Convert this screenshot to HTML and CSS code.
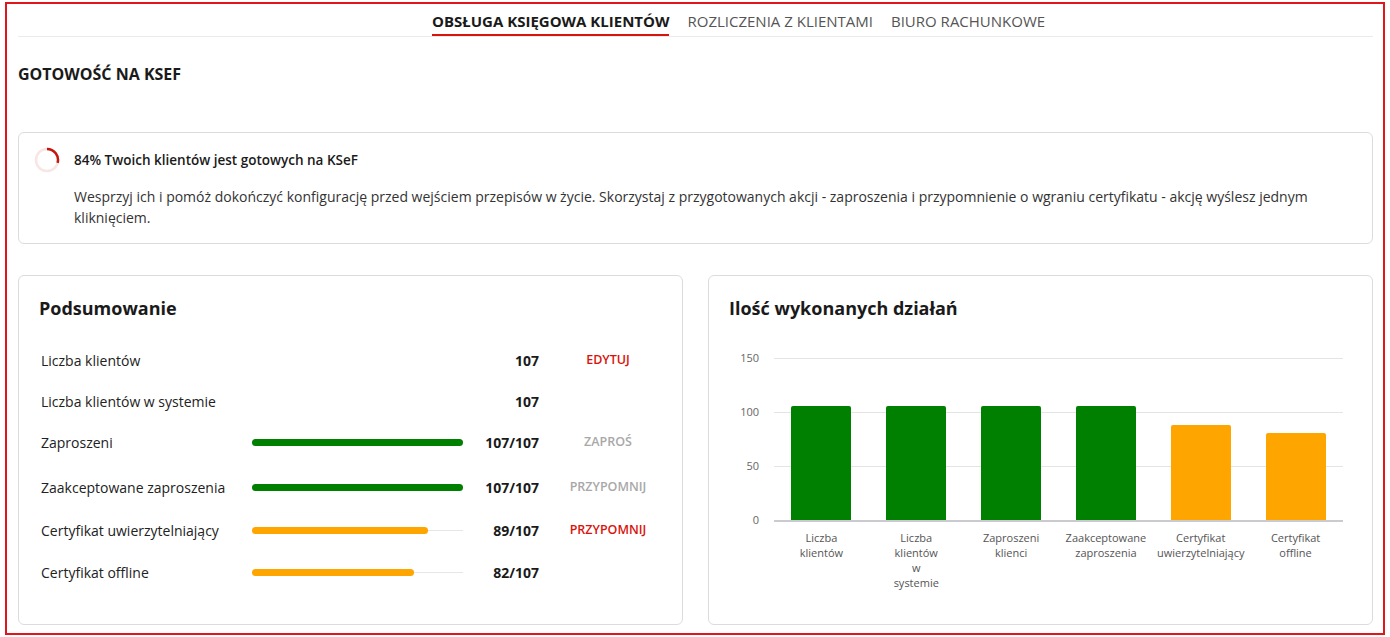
FILE: index.html
```html
<!DOCTYPE html>
<html lang="pl">
<head>
  <meta charset="UTF-8">
  <title>Gotowość na KSeF</title>
  <link rel="stylesheet" href="styles.css">
</head>
<body>
  <div class="frame">
    <div class="tabs">
      <a class="tab active">OBSŁUGA KSIĘGOWA KLIENTÓW</a>
      <a class="tab">ROZLICZENIA Z KLIENTAMI</a>
      <a class="tab">BIURO RACHUNKOWE</a>
    </div>

    <h1 class="page-title">GOTOWOŚĆ NA KSEF</h1>

    <div class="alert">
      <svg class="ring" width="26" height="26" viewBox="0 0 26 26">
        <circle cx="13" cy="13" r="11" fill="none" stroke="#f8e6e4" stroke-width="2.5"/>
        <path d="M13 2 A11 11 0 0 1 23.6 15.9" fill="none" stroke="#c4170f" stroke-width="2.5"/>
      </svg>
      <div class="alert-body">
        <div class="alert-title">84% Twoich klientów jest gotowych na KSeF</div>
        <p class="alert-text">Wesprzyj ich i pomóż dokończyć konfigurację przed wejściem przepisów w życie. Skorzystaj z przygotowanych akcji - zaproszenia i przypomnienie o wgraniu certyfikatu - akcję wyślesz jednym kliknięciem.</p>
      </div>
    </div>

    <div class="cards">
      <div class="card">
        <h2 class="card-title">Podsumowanie</h2>
        <div class="rows">
          <div class="row">
            <span class="label">Liczba klientów</span>
            <span class="track empty"></span>
            <span class="value">107</span>
            <span class="action red">EDYTUJ</span>
          </div>
          <div class="row">
            <span class="label">Liczba klientów w systemie</span>
            <span class="track empty"></span>
            <span class="value">107</span>
            <span class="action"></span>
          </div>
          <div class="row">
            <span class="label">Zaproszeni</span>
            <span class="track"><span class="fill green" style="width: 100%"></span></span>
            <span class="value">107/107</span>
            <span class="action grey">ZAPROŚ</span>
          </div>
          <div class="row">
            <span class="label">Zaakceptowane zaproszenia</span>
            <span class="track"><span class="fill green" style="width: 100%"></span></span>
            <span class="value">107/107</span>
            <span class="action grey">PRZYPOMNIJ</span>
          </div>
          <div class="row">
            <span class="label">Certyfikat uwierzytelniający</span>
            <span class="track"><span class="fill orange" style="width: 83.2%"></span></span>
            <span class="value">89/107</span>
            <span class="action red">PRZYPOMNIJ</span>
          </div>
          <div class="row">
            <span class="label">Certyfikat offline</span>
            <span class="track"><span class="fill orange" style="width: 76.6%"></span></span>
            <span class="value">82/107</span>
            <span class="action"></span>
          </div>
        </div>
      </div>

      <div class="card">
        <h2 class="card-title">Ilość wykonanych działań</h2>
        <div class="chart">
          <div class="axis">
            <span>150</span>
            <span>100</span>
            <span>50</span>
            <span>0</span>
          </div>
          <div class="plot">
            <div class="grid">
              <span></span><span></span><span></span><span class="base"></span>
            </div>
            <div class="bars">
              <div class="col"><div class="bar green" style="height: 114px"></div><div class="xlabel">Liczba<br>klientów</div></div>
              <div class="col"><div class="bar green" style="height: 114px"></div><div class="xlabel">Liczba<br>klientów<br>w<br>systemie</div></div>
              <div class="col"><div class="bar green" style="height: 114px"></div><div class="xlabel">Zaproszeni<br>klienci</div></div>
              <div class="col"><div class="bar green" style="height: 114px"></div><div class="xlabel">Zaakceptowane<br>zaproszenia</div></div>
              <div class="col"><div class="bar orange" style="height: 95px"></div><div class="xlabel">Certyfikat<br>uwierzytelniający</div></div>
              <div class="col"><div class="bar orange" style="height: 87px"></div><div class="xlabel">Certyfikat<br>offline</div></div>
            </div>
          </div>
        </div>
      </div>
    </div>
  </div>
</body>
</html>
```

FILE: styles.css
```css
* {
  margin: 0;
  padding: 0;
  box-sizing: border-box;
}

body {
  font-family: "Open Sans", "Noto Sans", sans-serif;
  color: #222;
  background: #fff;
}

.frame {
  margin: 2px 5px;
  height: 633px;
  border: 2px solid #e2141c;
  padding: 0 10px 0 11px;
  overflow: hidden;
}

.tabs {
  display: flex;
  gap: 18px;
  padding-left: 414px;
  border-bottom: 1px solid #ebebeb;
  height: 33px;
  align-items: flex-end;
}

.tab {
  font-size: 15px;
  color: #555;
  line-height: 20px;
  padding-bottom: 5px;
}

.tab.active {
  font-weight: 700;
  color: #1a1a1a;
  border-bottom: 2px solid #d7150f;
  padding-bottom: 3px;
}

.page-title {
  font-size: 16px;
  font-weight: 700;
  color: #1a1a1a;
  margin-top: 27px;
  line-height: 20px;
}

.alert {
  display: flex;
  gap: 14px;
  margin-top: 48px;
  border: 1px solid #dcdcdc;
  border-radius: 6px;
  padding: 14px 20px 14px 15px;
  height: 112px;
}

.ring {
  flex: none;
}

.alert-title {
  font-size: 13.5px;
  font-weight: 600;
  line-height: 26px;
  color: #1a1a1a;
}

.alert-text {
  font-size: 14px;
  line-height: 21px;
  color: #333;
  margin-top: 13px;
}

.cards {
  display: flex;
  gap: 25px;
  margin-top: 31px;
}

.card {
  flex: 1 1 0;
  min-width: 0;
  height: 350px;
  border: 1px solid #dcdcdc;
  border-radius: 6px;
  padding: 20px 20px;
}

.card-title {
  font-size: 18px;
  font-weight: 700;
  color: #1a1a1a;
  line-height: 24px;
}

.rows {
  margin-top: 20px;
  padding-left: 2px;
}

.row {
  display: flex;
  align-items: center;
  height: 41px;
}

.row:nth-child(4) {
  height: 49px;
}

.row:nth-child(5) {
  height: 37px;
}

.row:nth-child(6) {
  height: 47px;
}

.label {
  flex: none;
  width: 211px;
  font-size: 14px;
  color: #222;
}

.track {
  flex: none;
  width: 211px;
  height: 7px;
  background: linear-gradient(#e6e6e6, #e6e6e6) center / 100% 1px no-repeat;
}

.track.empty {
  background: none;
}

.fill {
  display: block;
  height: 7px;
  border-radius: 4px;
}

.green {
  background: #008000;
}

.orange {
  background: #ffa500;
}

.value {
  flex: none;
  width: 76px;
  text-align: right;
  font-size: 14px;
  font-weight: 700;
  color: #1a1a1a;
}

.action {
  flex: none;
  width: 100px;
  margin-left: 19px;
  text-align: center;
  font-size: 12.5px;
  font-weight: 600;
  margin-top: -3px;
}

.action.red {
  color: #d9120b;
}

.action.grey {
  color: #a8a8a8;
}

.chart {
  display: flex;
  margin-top: 28px;
}

.axis {
  width: 30px;
  display: flex;
  flex-direction: column;
  gap: 38px;
  text-align: right;
  font-size: 11px;
  color: #666;
  line-height: 16px;
  padding-top: 2px;
  margin-right: 15px;
}

.plot {
  position: relative;
  width: 569px;
  height: 240px;
}

.grid {
  position: absolute;
  top: 10px;
  left: 0;
  right: 0;
  display: flex;
  flex-direction: column;
  gap: 53px;
}

.grid span {
  display: block;
  height: 1px;
  background: #e4e4e4;
}

.grid span.base {
  height: 2px;
  background: #c9cbd0;
}

.bars {
  position: absolute;
  top: 10px;
  left: 0;
  right: 0;
  display: flex;
}

.col {
  width: 95px;
  height: 162px;
  position: relative;
  display: flex;
  flex-direction: column;
  align-items: center;
}

.bar {
  width: 60px;
  margin-top: auto;
  border-radius: 2px 2px 0 0;
}

.xlabel {
  position: absolute;
  top: 172px;
  left: 0;
  right: 0;
  text-align: center;
  font-size: 11px;
  line-height: 15px;
  color: #555;
}
```
